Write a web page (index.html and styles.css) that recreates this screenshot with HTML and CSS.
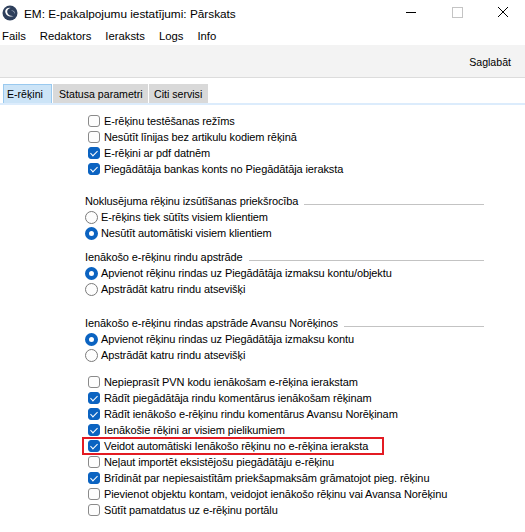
FILE: index.html
```html
<!DOCTYPE html>
<html lang="lv">
<head>
<meta charset="utf-8">
<title>EM: E-pakalpojumu iestatījumi: Pārskats</title>
<link rel="stylesheet" href="styles.css">
</head>
<body>
<div class="window">
  <div class="titlebar">
    <svg class="appicon" width="16" height="16" viewBox="0 0 16 16">
      <circle cx="8" cy="8" r="7.5" fill="#2e3f5c"/>
      <path d="M3.2 6.5 C3.5 10.5 8 13 12.5 10.8 C9.5 11.5 6 10.5 5.2 7.2 C4.8 5 6.5 3.2 8.5 2.9 C5.5 2.5 3.1 4.3 3.2 6.5 Z" fill="#ffffff"/>
      <path d="M9 5.5 C11 5.8 12.5 7 12.8 9 C13.3 6.8 11.8 5.2 9 5.5 Z" fill="#c9d3e2"/>
    </svg>
    <span class="title">EM: E-pakalpojumu iestatījumi: Pārskats</span>
    <div class="winctl">
      <svg class="ctl" width="46" height="26" viewBox="0 0 46 26"><path d="M18 12.5 H28" stroke="#000" stroke-width="1"/></svg>
      <svg class="ctl" width="46" height="26" viewBox="0 0 46 26"><rect x="18.5" y="7.5" width="10" height="10" fill="none" stroke="#c4c4c4" stroke-width="1"/></svg>
      <svg class="ctl" width="46" height="26" viewBox="0 0 46 26"><path d="M18 7 L28 17 M28 7 L18 17" stroke="#000" stroke-width="1"/></svg>
    </div>
  </div>
  <div class="menubar">
    <span>Fails</span><span>Redaktors</span><span>Ieraksts</span><span>Logs</span><span>Info</span>
  </div>
  <div class="toolbar">
    <span class="save">Saglabāt</span>
  </div>
  <div class="tabs">
    <span class="tab active">E-rēķini</span>
    <span class="tab t2">Statusa parametri</span>
    <span class="tab t3">Citi servisi</span>
  </div>
  <div class="tabline"></div>

  <div class="content">
    <div class="cbgroup first">
      <div class="row"><span class="cb"></span>E-rēķinu testēšanas režīms</div>
      <div class="row"><span class="cb"></span>Nesūtīt līnijas bez artikulu kodiem rēķinā</div>
      <div class="row"><span class="cb on"></span>E-rēķini ar pdf datnēm</div>
      <div class="row"><span class="cb on"></span>Piegādātāja bankas konts no Piegādātāja ieraksta</div>
    </div>

    <div class="rgroup g1">
      <div class="ghead"><span>Noklusējuma rēķinu izsūtīšanas priekšrocība</span><i></i></div>
      <div class="row"><span class="rb"></span>E-rēķins tiek sūtīts visiem klientiem</div>
      <div class="row"><span class="rb on"></span>Nesūtīt automātiski visiem klientiem</div>
    </div>

    <div class="rgroup g2">
      <div class="ghead"><span>Ienākošo e-rēķinu rindu apstrāde</span><i></i></div>
      <div class="row"><span class="rb on"></span>Apvienot rēķinu rindas uz Piegādātāja izmaksu kontu/objektu</div>
      <div class="row"><span class="rb"></span>Apstrādāt katru rindu atsevišķi</div>
    </div>

    <div class="rgroup g3">
      <div class="ghead"><span>Ienākošo e-rēķinu rindas apstrāde Avansu Norēķinos</span><i></i></div>
      <div class="row"><span class="rb on"></span>Apvienot rēķinu rindas uz Piegādātāja izmaksu kontu</div>
      <div class="row"><span class="rb"></span>Apstrādāt katru rindu atsevišķi</div>
    </div>

    <div class="cbgroup last">
      <div class="row"><span class="cb"></span>Nepieprasīt PVN kodu ienākošam e-rēķina ierakstam</div>
      <div class="row"><span class="cb on"></span>Rādīt piegādātāja rindu komentārus ienākošam rēķinam</div>
      <div class="row"><span class="cb on"></span>Rādīt ienākošo e-rēķinu rindu komentārus Avansu Norēķinam</div>
      <div class="row"><span class="cb on"></span>Ienākošie rēķini ar visiem pielikumiem</div>
      <div class="row hl"><span class="cb on"></span>Veidot automātiski Ienākošo rēķinu no e-rēķina ieraksta</div>
      <div class="row"><span class="cb"></span>Neļaut importēt eksistējošu piegādātāju e-rēķinu</div>
      <div class="row"><span class="cb on"></span>Brīdināt par nepiesaistītām priekšapmaksām grāmatojot pieg. rēķinu</div>
      <div class="row"><span class="cb"></span>Pievienot objektu kontam, veidojot ienākošo rēķinu vai Avansa Norēķinu</div>
      <div class="row"><span class="cb"></span>Sūtīt pamatdatus uz e-rēķinu portālu</div>
    </div>
  </div>
</div>
</body>
</html>
```

FILE: styles.css
```css
html, body {
  margin: 0;
  padding: 0;
  background: #ffffff;
}
body {
  font-family: "Liberation Sans", Arial, sans-serif;
  color: #000000;
}
.window {
  width: 525px;
  height: 532px;
  overflow: hidden;
  background: #ffffff;
}
.titlebar {
  height: 26px;
  display: flex;
  align-items: center;
}
.appicon {
  margin-left: 2px;
  margin-right: 6px;
  flex: none;
}
.title {
  flex: 1;
  font-size: 11.8px;
  padding-top: 1px;
}
.winctl {
  display: flex;
  align-items: center;
  height: 26px;
  margin-right: -1px;
}
.ctl {
  display: block;
}
.menubar {
  height: 19px;
  display: flex;
  align-items: center;
  gap: 14px;
  padding-left: 2px;
  font-size: 11.3px;
}
.toolbar {
  height: 32px;
  background: #f3f3f3;
  border-bottom: 1px solid #dcdcdc;
  display: flex;
  align-items: center;
  justify-content: flex-end;
  padding-right: 14px;
  font-size: 10.6px;
}
.save {
  padding-top: 1px;
}
.tabs {
  display: flex;
  margin-top: 6px;
  padding-left: 3px;
  gap: 1px;
  height: 19px;
  font-size: 10.6px;
}
.tab {
  display: flex;
  align-items: center;
  padding: 0 0 0 6px;
  background: #d9d9d9;
  height: 19px;
  box-sizing: border-box;
  white-space: nowrap;
}
.tab.active {
  width: 49px;
  background: #cce4f7;
  border: 1px solid #99c9ef;
  border-bottom: none;
  padding: 0 0 0 3px;
}
.tab.t2 { width: 95px; }
.tab.t3 { width: 59px; padding-left: 5px; }
.tabline {
  height: 2px;
  background: #dcecfc;
}
.content {
  font-size: 11px;
  letter-spacing: -0.1px;
}
.row {
  height: 16px;
  display: flex;
  align-items: center;
  white-space: nowrap;
}
.cbgroup {
  padding-left: 88px;
}
.cbgroup.first {
  margin-top: 8px;
}
.cbgroup.last {
  margin-top: 11px;
}
.rgroup {
  padding-left: 85px;
}
.g1 { margin-top: 16px; }
.g2 { margin-top: 8px; }
.g3 { margin-top: 18px; }
.ghead {
  height: 16px;
  display: flex;
  align-items: center;
  width: 399px;
}
.ghead i {
  flex: 1;
  height: 1px;
  background: #c3c3c3;
  margin-left: 6px;
  margin-top: 7px;
}
.cb {
  width: 12px;
  height: 12px;
  box-sizing: border-box;
  border: 1px solid #8a8a8a;
  border-radius: 3px;
  background: #fdfdfd;
  margin-right: 4px;
  flex: none;
  position: relative;
}
.cb.on {
  background: #0b63c1;
  border-color: #0b63c1;
}
.cb.on::after {
  content: "";
  position: absolute;
  left: 3px;
  top: 1px;
  width: 3px;
  height: 6px;
  border-right: 1.2px solid #ffffff;
  border-bottom: 1.2px solid #ffffff;
  transform: rotate(45deg);
}
.rb {
  width: 13px;
  height: 13px;
  box-sizing: border-box;
  border: 1px solid #7a7a7a;
  border-radius: 50%;
  background: #fdfdfd;
  margin-right: 3px;
  flex: none;
}
.rb.on {
  border: 4px solid #0b63c1;
  background: #ffffff;
}
.hl {
  width: 300px;
  box-sizing: border-box;
  margin-left: -5px;
  padding-left: 5px;
  outline: 2px solid #e31b23;
  outline-offset: -1px;
}
```
